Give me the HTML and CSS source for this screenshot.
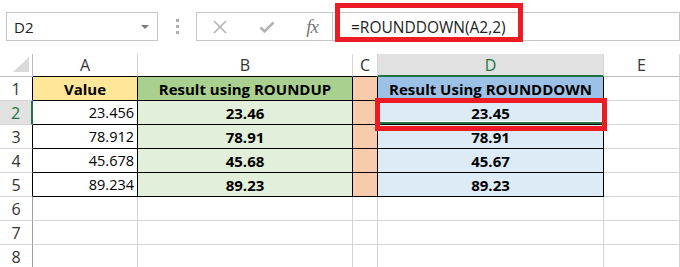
FILE: index.html
```html
<!DOCTYPE html>
<html lang="en">
<head>
  <meta charset="UTF-8" />
  <title>ROUNDDOWN example</title>
  <link rel="stylesheet" href="styles.css">
</head>
<body>
<div class="sheet">
  <!-- formula bar -->
  <div class="toolbar">
    <div class="name-box">
      <span>D2</span>
      <span class="drop"></span>
    </div>
    <div class="grip"><i></i><i></i><i></i></div>
    <div class="fx-buttons">
      <svg class="ico" width="14" height="14" viewBox="0 0 14 14"><path d="M1 1L13 13M13 1L1 13" stroke="#b4b4b4" stroke-width="1.6" fill="none"/></svg>
      <svg class="ico" width="16" height="14" viewBox="0 0 16 14"><path d="M1.5 7.5L5.5 11.5L14.5 2.5" stroke="#b4b4b4" stroke-width="2.6" fill="none"/></svg>
      <span class="fx">fx</span>
    </div>
    <div class="formula">=ROUNDDOWN(A2,2)</div>
    <div class="mark mark-formula"></div>
  </div>

  <!-- grid -->
  <div class="grid">
    <div class="corner"><span class="tri"></span></div>
    <div class="ch edge">A</div>
    <div class="ch edge">B</div>
    <div class="ch edge">C</div>
    <div class="ch active">D</div>
    <div class="ch">E</div>

    <div class="rh dark">1</div>
    <div class="cell t c-yellow bold center">Value</div>
    <div class="cell t c-green bold center">Result using ROUNDUP</div>
    <div class="cell t c-orange"></div>
    <div class="cell t c-blue bold center">Result Using ROUNDDOWN</div>
    <div class="cell"></div>

    <div class="rh active">2</div>
    <div class="cell t right">23.456</div>
    <div class="cell t c-lgreen bold center">23.46</div>
    <div class="cell t c-orange"></div>
    <div class="cell t c-lblue bold center sel">23.45</div>
    <div class="cell"></div>

    <div class="rh dark">3</div>
    <div class="cell t right">78.912</div>
    <div class="cell t c-lgreen bold center">78.91</div>
    <div class="cell t c-orange"></div>
    <div class="cell t c-lblue bold center">78.91</div>
    <div class="cell"></div>

    <div class="rh dark">4</div>
    <div class="cell t right">45.678</div>
    <div class="cell t c-lgreen bold center">45.68</div>
    <div class="cell t c-orange"></div>
    <div class="cell t c-lblue bold center">45.67</div>
    <div class="cell"></div>

    <div class="rh dark">5</div>
    <div class="cell t right">89.234</div>
    <div class="cell t c-lgreen bold center">89.23</div>
    <div class="cell t c-orange"></div>
    <div class="cell t c-lblue bold center">89.23</div>
    <div class="cell"></div>

    <div class="rh">6</div>
    <div class="cell"></div><div class="cell"></div><div class="cell"></div><div class="cell"></div><div class="cell"></div>
    <div class="rh">7</div>
    <div class="cell"></div><div class="cell"></div><div class="cell"></div><div class="cell"></div><div class="cell"></div>
    <div class="rh">8</div>
    <div class="cell"></div><div class="cell"></div><div class="cell"></div><div class="cell"></div><div class="cell"></div>

    <div class="mark mark-cell"></div>
  </div>
</div>
</body>
</html>
```

FILE: styles.css
```css
* {
  box-sizing: border-box;
}
body {
  margin: 0;
  background: #fff;
  font-family: "Open Sans", "Noto Sans", sans-serif;
  color: #000;
  overflow: hidden;
}

.sheet {
  position: relative;
  width: 680px;
  height: 267px;
}

/* formula bar */
.toolbar {
  display: flex;
  align-items: stretch;
  height: 29px;
  margin-top: 12px;
  margin-bottom: 13px;
  position: relative;
}
.name-box {
  width: 152px;
  margin-left: 6px;
  border: 1px solid #c6c6c6;
  display: flex;
  align-items: center;
  justify-content: space-between;
  padding: 0 8px 0 7px;
  font-size: 15px;
  color: #222;
}
.drop {
  width: 0;
  height: 0;
  border-left: 4px solid transparent;
  border-right: 4px solid transparent;
  border-top: 4px solid #7a7a7a;
}
.grip {
  width: 38px;
  display: flex;
  flex-direction: column;
  align-items: center;
  justify-content: center;
  gap: 3px;
}
.grip i {
  display: block;
  width: 3px;
  height: 3px;
  background: #b0b0b0;
}
.fx-buttons {
  width: 136px;
  border: 1px solid #c6c6c6;
  border-right: none;
  display: flex;
  align-items: center;
  justify-content: space-between;
  padding: 0 14px 0 16px;
}
.fx {
  font-family: "Liberation Serif", serif;
  font-style: italic;
  font-size: 19px;
  color: #777;
  letter-spacing: -1px;
}
.formula {
  flex: 1;
  border: 1px solid #c6c6c6;
  padding-left: 18px;
  display: flex;
  align-items: center;
  font-size: 15.5px;
  color: #222;
}

.mark {
  position: absolute;
  border: 5px solid #ed1c24;
  pointer-events: none;
}
.mark-formula {
  left: 335px;
  top: -9px;
  width: 188px;
  height: 39px;
}

/* grid */
.grid {
  position: relative;
  display: grid;
  grid-template-columns: 33px 105px 215px 25px 226px 76px;
  grid-template-rows: 23px repeat(8, 24px);
}
.corner {
  border-right: 1px solid #bdbdbd;
  border-bottom: 1px solid #bdbdbd;
  position: relative;
}
.tri {
  position: absolute;
  right: 3px;
  bottom: 4px;
  width: 0;
  height: 0;
  border-left: 16px solid transparent;
  border-bottom: 15px solid #dadada;
}
.ch {
  border-right: 1px solid #d4d4d4;
  border-bottom: 1px solid #bdbdbd;
  display: flex;
  align-items: center;
  justify-content: center;
  font-size: 16px;
  color: #333;
}
.ch.edge {
  border-bottom-color: #000;
}
.ch.active {
  background: #e1e1e1;
  color: #217346;
  border-bottom: 2px solid #217346;
}
.rh {
  border-right: 1px solid #9e9e9e;
  border-bottom: 1px solid #d4d4d4;
  display: flex;
  align-items: center;
  justify-content: center;
  font-size: 16px;
  color: #333;
}
.rh.dark {
  border-right-color: #000;
}
.rh.active {
  background: #e1e1e1;
  color: #217346;
  border-right: 2px solid #217346;
}
.cell {
  border-right: 1px solid #d4d4d4;
  border-bottom: 1px solid #d4d4d4;
  display: flex;
  align-items: center;
  font-size: 14.5px;
  padding: 0 3px;
}
.cell.t {
  border-right-color: #000;
  border-bottom-color: #000;
}
.bold {
  font-weight: 700;
  font-size: 15px;
}
.center {
  justify-content: center;
}
.right {
  justify-content: flex-end;
}
.c-yellow { background: #ffe699; }
.c-green { background: #a9d08e; }
.c-lgreen { background: #e2efda; }
.c-orange { background: #f8cbad; }
.c-blue { background: #9bc2e6; }
.c-lblue { background: #ddebf7; }
.sel {
  box-shadow: inset 0 -2px 0 #217346, inset 0 -3px 0 #fff;
}

.mark-cell {
  left: 375px;
  top: 44px;
  width: 232px;
  height: 33px;
}
```
